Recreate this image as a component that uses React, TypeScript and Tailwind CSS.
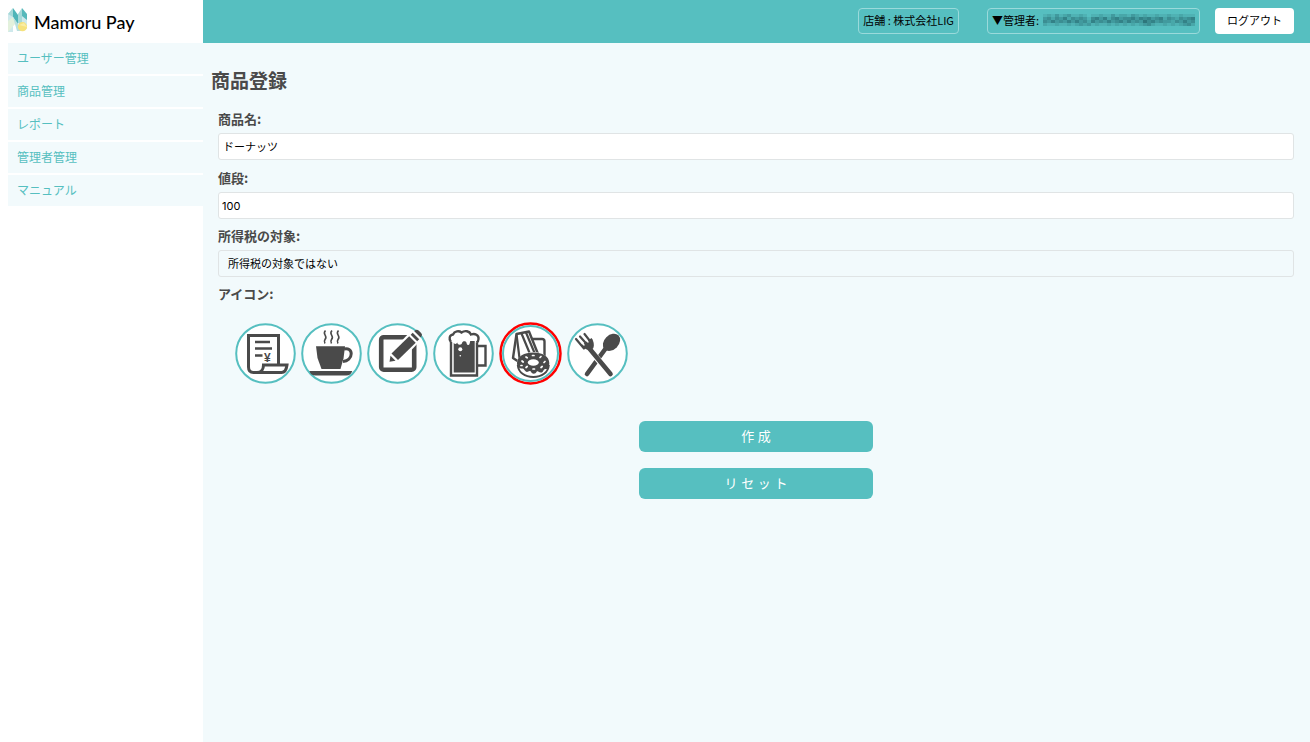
import { useState } from "react";
import type { ReactNode } from "react";

const INK = "#4a4a4a";

const menu = ["ユーザー管理", "商品管理", "レポート", "管理者管理", "マニュアル"];

// opacity of each block in the masked mail address, row by row
const mask = [
  [1, 2, 1, 3, 1, 2, 3, 1, 1, 2, 1, 0, 1, 1, 2, 1, 1, 3, 1, 2, 2, 1, 3, 2, 1, 2, 1, 1, 2, 1, 1, 2, 1, 1, 2, 1, 1, 1],
  [3, 4, 2, 4, 3, 5, 2, 4, 3, 4, 3, 1, 4, 5, 3, 5, 2, 4, 5, 3, 4, 4, 5, 3, 5, 4, 5, 3, 4, 5, 2, 4, 3, 2, 4, 3, 4, 5],
  [4, 3, 5, 3, 4, 3, 5, 3, 5, 3, 4, 2, 5, 3, 4, 3, 5, 3, 4, 5, 3, 5, 3, 4, 3, 6, 4, 5, 3, 4, 3, 3, 2, 4, 3, 5, 3, 4],
  [2, 1, 1, 2, 1, 1, 2, 1, 2, 3, 2, 3, 1, 2, 1, 1, 2, 1, 2, 1, 2, 1, 2, 1, 2, 3, 4, 2, 1, 1, 2, 1, 2, 1, 2, 3, 4, 2],
];

const Logo = () => (
  <svg width="20" height="24" viewBox="0 0 20 24" aria-hidden="true">
    <path d="M0 6 5 0v24H0z" fill="#cfe9ec" />
    <path d="M5 0l5 7v10L5 9z" fill="#4fb5b8" />
    <path d="M0 6 5 0v9z" fill="#a6d9d9" />
    <path d="M0 24V13l5-4 3 6z" fill="#e3f1dc" />
    <path d="M5 9l6 8 3 6H9z" fill="#b9e0e0" />
    <path d="M10 6l4-6v18l-4-3z" fill="#a6d9d9" />
    <path d="M14 0l5 6v14l-5-4z" fill="#57b9bb" />
    <path d="M14 8l5 4v9l-5-2z" fill="#cfe9ec" />
    <circle cx="14.500" cy="18.700" r="4.600" fill="#f6e27d" />
    <path d="M11 17l5-2 3 4z" fill="#f9eda6" />
  </svg>
);

const icons: { name: string; art: ReactNode }[] = [
  {
    name: "レシート",
    art: (
      <g fill="none" stroke={INK} strokeWidth="3">
        <path d="M43.500 41V12.500H13.500V44c0 3.500 2 5.500 5 5.500h28c3.500 0 5-3.500 5.500-7.500H28.500c0 4-2 7.500-6.500 7.500" />
        <path d="M20 19h15M20 25.500h17M20 32.500h7.500" strokeWidth="2.600" />
        <text
          x="29"
          y="38.500"
          fontSize="12"
          fontWeight="bold"
          fill={INK}
          stroke="none"
          fontFamily="Liberation Sans, sans-serif"
        >
          ¥
        </text>
      </g>
    ),
  },
  {
    name: "カップ",
    art: (
      <g fill="none" stroke={INK}>
        <path d="M15 23.300h29l-1.500 12L39.500 46h-19L16.500 35z" fill={INK} stroke="none" />
        <path d="M43 26c4-1 7.200.5 7.200 4.800S46.500 38 42 38.500" strokeWidth="3" />
        <path d="M8.300 48h43c-1 3.200-3 4.600-6 4.600H14.500c-3 0-5.200-1.400-6.200-4.600z" fill={INK} stroke="none" />
        <path
          d="M24.500 7.500c-4 4 3 5-.5 9-1 1.500-1 2.500 0 4M31 7.500c-4 4 3 5-.5 9-1 1.500-1 2.500 0 4M37.500 7.500c-4 4 3 5-.5 9-1 1.500-1 2.500 0 4"
          strokeWidth="1.600"
        />
      </g>
    ),
  },
  {
    name: "編集",
    art: (
      <g>
        <rect x="14.200" y="14.200" width="33" height="32.500" rx="2.500" fill="none" stroke={INK} strokeWidth="4.600" />
        <path d="M21 40.500l1.500-10L44 8l10 9-22 23z" fill="#fff" />
        <path d="M22.500 38.700l1-6 5 5z" fill={INK} />
        <path d="M24.500 30.500l17.700-17.200 6.500 6.500L31 37z" fill={INK} />
        <path d="M43.700 11.800l2-2 6.500 6.500-2 2z" fill={INK} />
        <path d="M47.300 8.300l1.300-1.200q1.500-1 3 .5l2.500 2.500q1.500 1.500.5 3l-1 1.500z" fill={INK} />
      </g>
    ),
  },
  {
    name: "ビール",
    art: (
      <g fill="none" stroke={INK} strokeWidth="2.400">
        <path d="M18 18v34.500h26V17" />
        <path d="M45 23h7.500v19.500H45" />
        <path
          d="M18 19c-2.500-3-1.500-7 2-7.500 1.500-3.500 6-4 8.500-2 3.500-2.500 8-1.500 9.500 2 4-1.500 8 .5 7.500 4.500 0 2-1 3-2 3.500"
          fill="#fff"
        />
        <path
          d="M20.700 20c1.500 1.500 3 1 3.500-.5.500 3 4.500 3 5 0 .8-2 3.500-1.500 4-.5.800 2 .5 3 2 3s1.500-2 2-4h4.500v31.500h-21z"
          fill={INK}
          stroke="none"
        />
        <circle cx="27.300" cy="26.300" r="2" fill="#fff" stroke="none" />
        <circle cx="27.300" cy="32.700" r="0.800" fill="#fff" stroke="none" />
      </g>
    ),
  },
  {
    name: "ドーナツ",
    art: (
      <g fill="none" stroke={INK} strokeWidth="2.400" strokeLinejoin="round">
        <path d="M33 17h10q2.500 0 2.500 2.500V34" />
        <path d="M17.500 12L30 9.500 39 32l-19 8-6-4z" fill="#fff" />
        <path d="M17.500 12.500L20.500 36M22.500 11.500L31 32M27 10.500L36 32" strokeWidth="2.200" />
        <ellipse cx="34.300" cy="43" rx="17" ry="13" fill="#fff" stroke="none" />
        <path d="M18.800 43c.5 7.500 7 12 15.500 12s15-4.500 15.500-12" strokeWidth="2" />
        <path
          d="M18 41c0-6.500 7.300-10.500 16.300-10.500s16 4 16 10.500c0 4-1.500 6.500-4 6-2 0-2 4-4.500 3.500-2 0-2.500-2-4-1-1.500 3-4.500 3-6 0-2-1.500-3 1.500-5 0-1.500-1-1.500-3-3.500-3-3 0-5.300-1.500-5.300-5.500z"
          fill={INK}
          stroke="none"
        />
        <ellipse cx="34.300" cy="40.500" rx="5.500" ry="3.200" fill="#fff" stroke="none" />
        <path
          d="M23 39l1.200 1M27 35l1.200.8M33.500 33.500h1.500M41 35.500l1-1M45 40.500l1-1M42 45.500l1.200-1M34 47h1.500M27 45.500l1.200-1M22 43.500h1"
          stroke="#fff"
          strokeWidth="1.700"
          strokeLinecap="round"
        />
      </g>
    ),
  },
  {
    name: "食事",
    art: (
      <g fill="none" stroke={INK} strokeLinecap="round">
        <path d="M39 25L20 51" strokeWidth="4.600" />
        <ellipse cx="44.500" cy="19.300" rx="9.800" ry="7.300" transform="rotate(-45 44.500 19.300)" fill={INK} stroke="none" />
        <path d="M22 26L43.500 51" stroke="#fff" strokeWidth="6" />
        <path d="M22 25L43.500 51" strokeWidth="4.600" />
        <path d="M9 16l8 9.500M13 13.500l8 9M17.500 11l7 9" strokeWidth="2.200" />
        <path d="M14 22.500l10.500-7.500c2.500 3.500 3 8 1.500 10.500-3.500 2.500-9 1-12-3z" fill={INK} stroke="none" />
        <path d="M12.500 16.500l4.500 5.500M16.500 13.500l4.500 5.500" stroke="#fff" strokeWidth="1.400" />
      </g>
    ),
  },
];

const Header = () => (
  <header className="flex h-[43px] bg-[#56bfc0]">
    <a href="#" className="flex w-[203px] shrink-0 items-center gap-1.5 bg-white pb-1 pl-2 text-black">
      <Logo />
      <span className="pt-1 font-['Lato',sans-serif] text-[18px] leading-6 font-medium">Mamoru Pay</span>
    </a>
    <div className="flex flex-1 items-start justify-end pt-2 pr-4 text-[11px]">
      <div className="mr-7 flex h-[26px] items-center rounded border border-[#9adadb] px-1 pb-0.5">
        店舗 : 株式会社LIG
      </div>
      <button
        type="button"
        className="mr-[15px] flex h-[26px] items-center gap-1 rounded border border-[#9adadb] px-1 pb-0.5"
      >
        <span>▼管理者:</span>
        <svg width="152" height="12" viewBox="0 0 152 12" aria-hidden="true">
          {mask.map((row, y) =>
            row.map((v, x) => (
              <rect key={`${x}-${y}`} x={x * 4} y={y * 3} width="4" height="3" fill="#1d5a60" opacity={v * 0.12} />
            ))
          )}
        </svg>
      </button>
      <button type="button" className="h-[26px] rounded bg-white px-3 pb-0.5">
        ログアウト
      </button>
    </div>
  </header>
);

const Sidebar = () => (
  <nav className="w-[203px] shrink-0 bg-white pl-2">
    <ul className="flex flex-col gap-0.5">
      {menu.map((item) => (
        <li key={item}>
          <a href="#" className="block h-[31px] bg-[#f2fafc] pl-[9px] text-[12px] leading-[29px] text-[#56bfc0]">
            {item}
          </a>
        </li>
      ))}
    </ul>
  </nav>
);

const App = () => {
  const [name, setName] = useState("ドーナッツ");
  const [price, setPrice] = useState("100");
  const [icon, setIcon] = useState("ドーナツ");

  return (
    <div className="flex min-h-screen flex-col font-['Noto_Sans_CJK_JP',sans-serif] text-black">
      <Header />
      <div className="flex flex-1">
        <Sidebar />
        <main className="min-w-0 flex-1 bg-[#f2fafc] pt-[23px] pr-4 pl-2">
          <h1 className="text-[19px] leading-7 font-bold text-[#4a4a4a]">商品登録</h1>
          <form className="mt-[15px] pl-[7px] text-[11px]" onSubmit={(e) => e.preventDefault()}>
            <div className="mb-2">
              <label htmlFor="name" className="mb-1 block text-[13px] leading-5 font-bold text-[#4a4a4a]">
                商品名:
              </label>
              <input
                id="name"
                value={name}
                onChange={(e) => setName(e.target.value)}
                className="block h-[27px] w-full rounded-[3px] border border-[#e0e4e5] bg-white px-1 pb-0.5"
              />
            </div>
            <div className="mb-[7px]">
              <label htmlFor="price" className="mb-1 block text-[13px] leading-5 font-bold text-[#4a4a4a]">
                値段:
              </label>
              <input
                id="price"
                value={price}
                onChange={(e) => setPrice(e.target.value)}
                className="block h-[27px] w-full rounded-[3px] border border-[#e0e4e5] bg-white px-[3px] font-['Inter',sans-serif]"
              />
            </div>
            <div className="mb-[7px]">
              <label htmlFor="tax" className="mb-1 block text-[13px] leading-5 font-bold text-[#4a4a4a]">
                所得税の対象:
              </label>
              <select
                id="tax"
                className="block h-[27px] w-full appearance-none rounded-[3px] border border-[#e0e4e5] bg-transparent px-[9px]"
              >
                <option>所得税の対象ではない</option>
                <option>所得税の対象</option>
              </select>
            </div>

            <fieldset>
              <legend className="text-[13px] leading-5 font-bold text-[#4a4a4a]">アイコン:</legend>
              <div className="mt-[18px] flex flex-wrap items-center gap-[5px] pl-[17px]">
                {icons.map(({ name: id, art }) => {
                  const on = id === icon;
                  return (
                    <label key={id} className="cursor-pointer">
                      <input
                        type="radio"
                        name="icon"
                        aria-label={id}
                        checked={on}
                        onChange={() => setIcon(id)}
                        className="sr-only"
                      />
                      {on ? (
                        <svg width="63" height="63" viewBox="0 0 63 63" className="block">
                          <circle cx="31.500" cy="31.500" r="30" fill="#fff" stroke="#f00" strokeWidth="2.500" />
                          <circle cx="31.500" cy="31.500" r="27.500" fill="#fff" stroke="#56bfc0" strokeWidth="2" />
                          {art}
                        </svg>
                      ) : (
                        <svg width="61" height="61" viewBox="0 0 61 61" className="block">
                          <circle cx="30.500" cy="30.500" r="29.300" fill="#fff" stroke="#56bfc0" strokeWidth="2" />
                          {art}
                        </svg>
                      )}
                    </label>
                  );
                })}
              </div>
            </fieldset>

            {/* Actions */}
            <div className="mt-9 flex flex-col items-center gap-4 font-['Liberation_Sans','Noto_Sans_CJK_JP',sans-serif] text-[13px] text-white">
              <button type="submit" className="h-[31px] w-[234px] rounded-md bg-[#56bfc0]">
                作 成
              </button>
              <button type="reset" className="h-[31px] w-[234px] rounded-md bg-[#56bfc0]">
                リ セ ッ ト
              </button>
            </div>
          </form>
        </main>
      </div>
    </div>
  );
};

export default App;
